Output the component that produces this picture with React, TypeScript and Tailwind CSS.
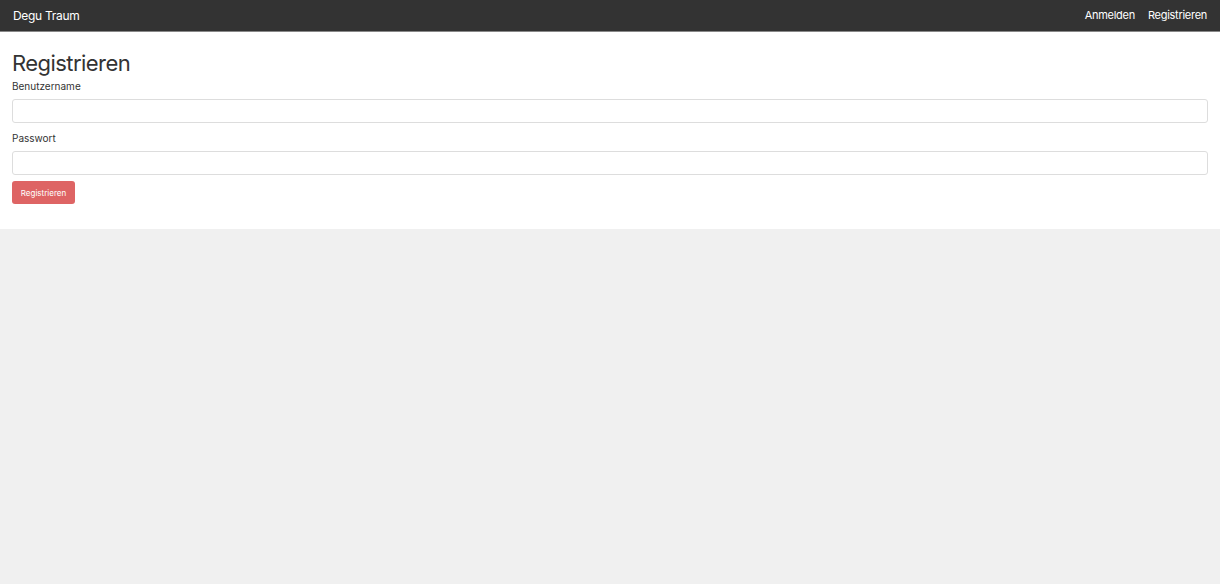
import { useState } from 'react';

export default function App() {
  const [username, setUsername] = useState('');
  const [password, setPassword] = useState('');

  return (
    <div className="min-h-screen bg-[#f0f0f0] font-['Inter',sans-serif] text-[#333]">
      {/* Navbar */}
      <nav className="h-8 bg-[#333333] flex items-center justify-between px-[13px] text-white text-[11px] border-b border-[#888]">
        <a href="#" className="text-[12px] tracking-tight">Degu Traum</a>
        <div className="flex gap-[13px]">
          <a href="#" className="tracking-tight">Anmelden</a>
          <a href="#" className="tracking-tight">Registrieren</a>
        </div>
      </nav>

      {/* Form */}
      <main className="bg-white px-3 pt-[16px] pb-[25px]">
        <h1 className="text-[22px] leading-[30px] tracking-tight text-[#333]">Registrieren</h1>
        <form onSubmit={e => e.preventDefault()} className="flex flex-col">
          <label className="text-[10px] leading-[14px] mt-[1px]">Benutzername</label>
          <input
            value={username}
            onChange={e => setUsername(e.target.value)}
            className="mt-[6px] h-[24px] w-full rounded-[3px] border border-[#ddd] px-2 text-[11px] outline-none"
          />
          <label className="text-[10px] leading-[14px] mt-[8px]">Passwort</label>
          <input
            type="password"
            value={password}
            onChange={e => setPassword(e.target.value)}
            className="mt-[6px] h-[24px] w-full rounded-[3px] border border-[#ddd] px-2 text-[11px] outline-none"
          />
          <button
            type="submit"
            className="mt-[6px] self-start h-[23px] w-[63px] rounded-[3px] bg-[#de6464] text-white text-[8px]"
          >
            Registrieren
          </button>
        </form>
      </main>
    </div>
  );
}
